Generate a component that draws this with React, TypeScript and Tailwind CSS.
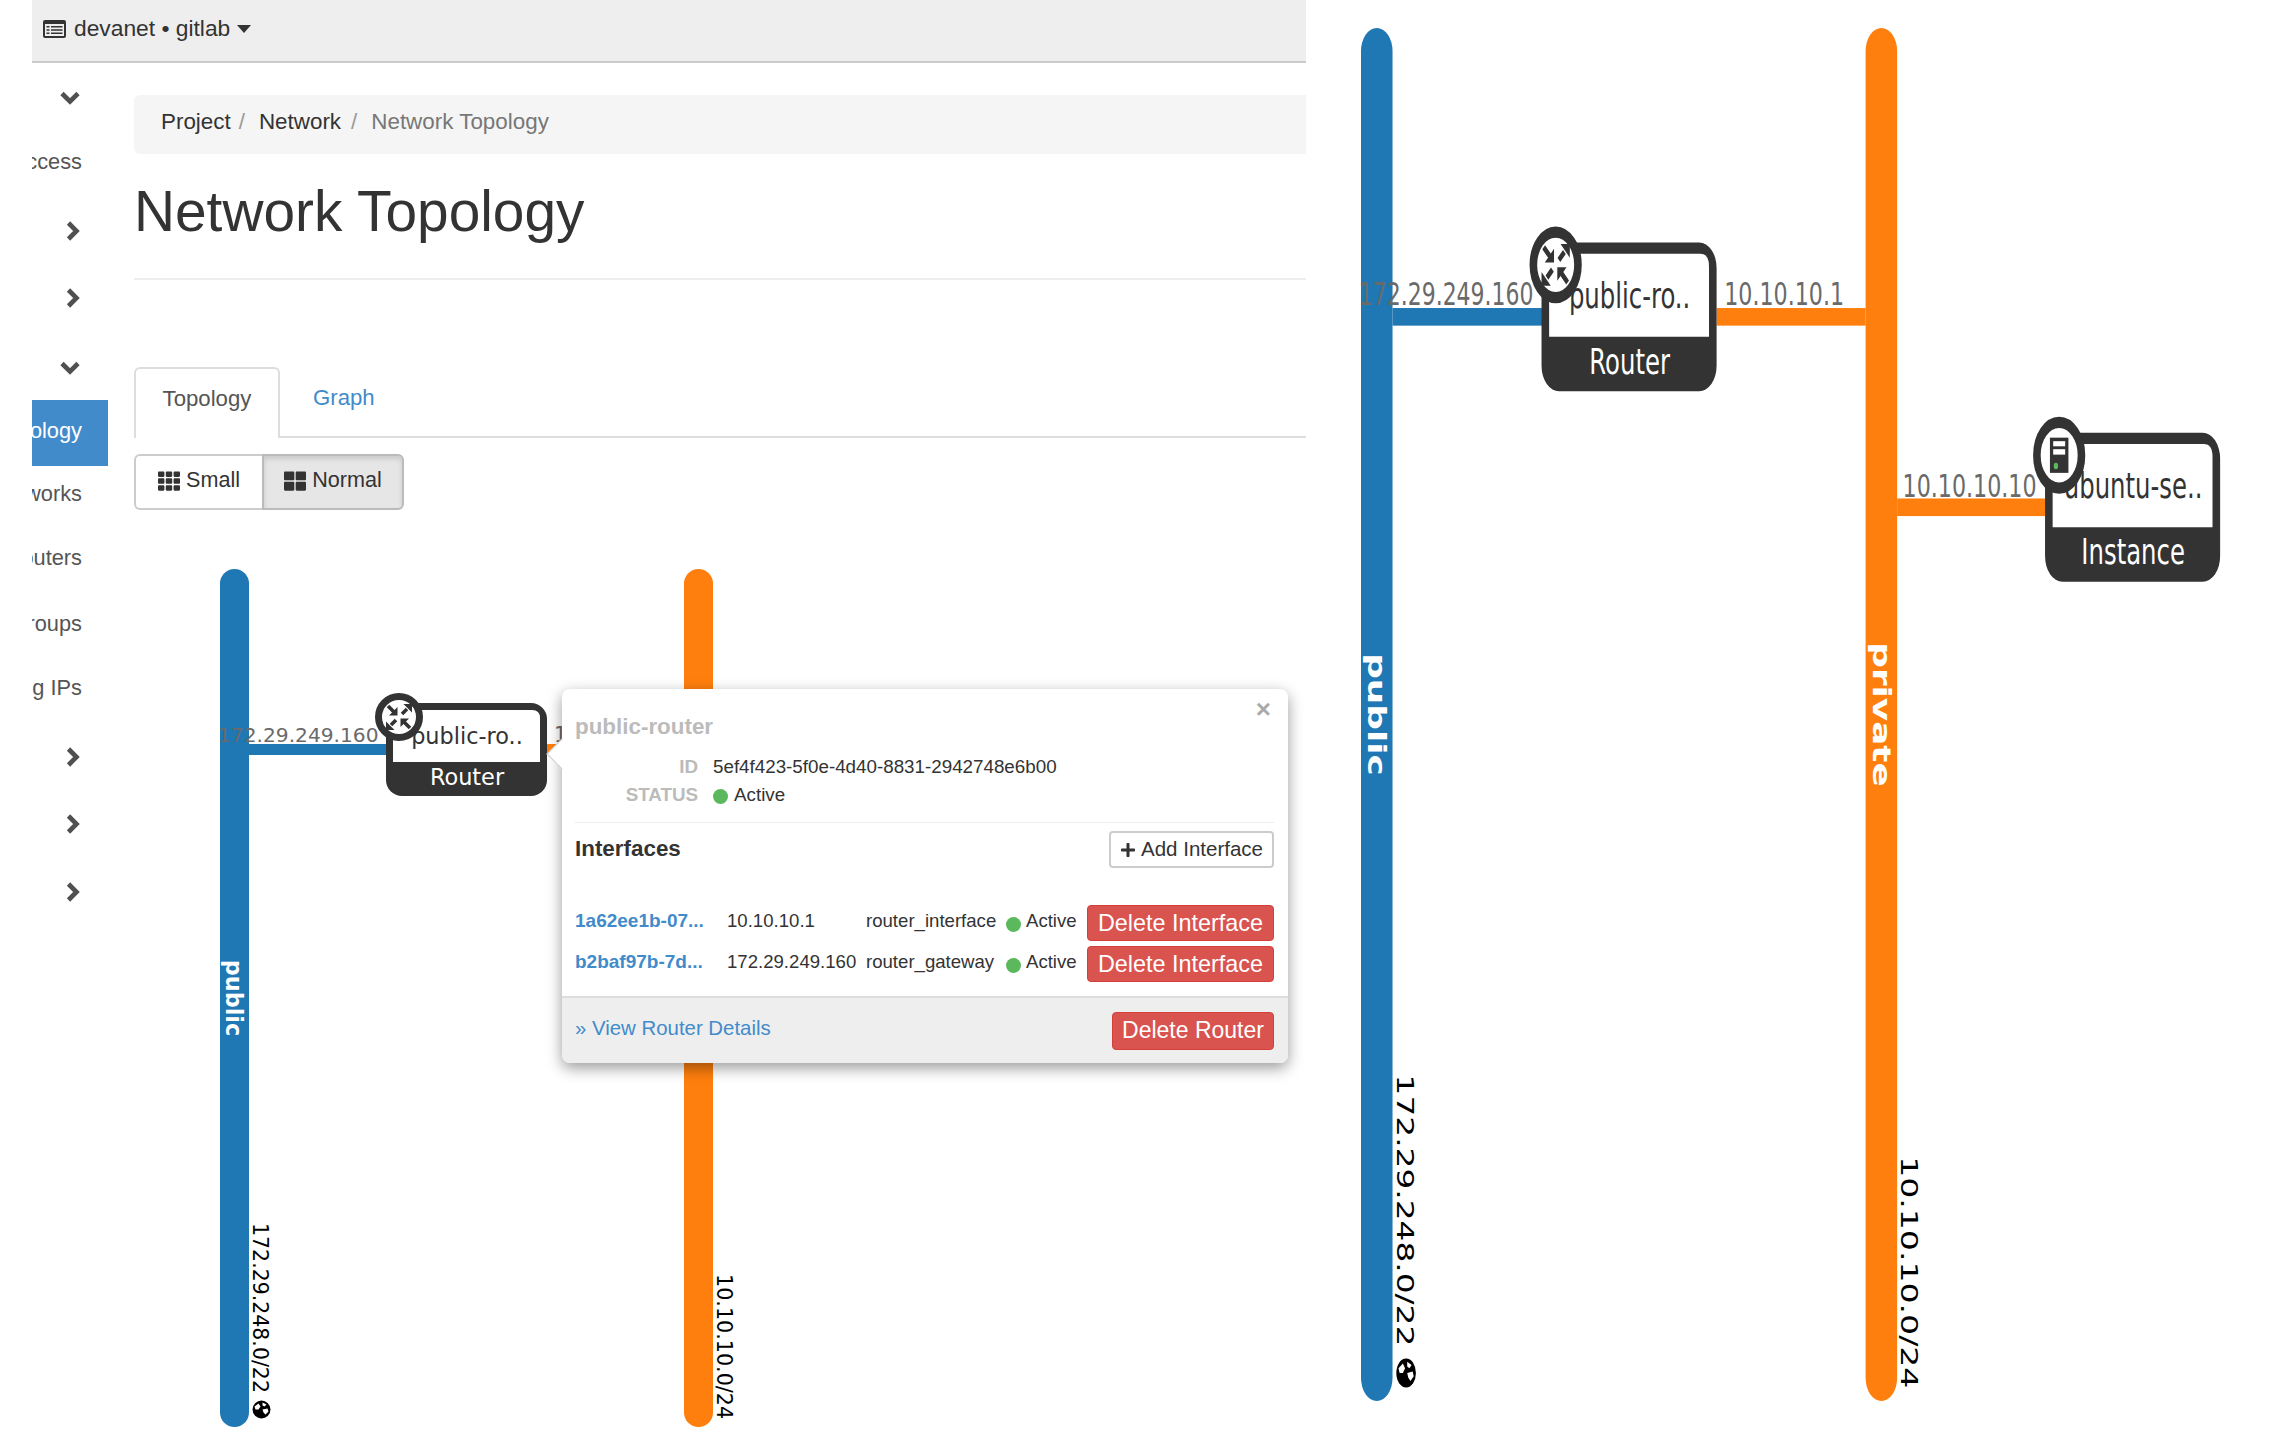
import { FaPlus, FaTh, FaThLarge } from "react-icons/fa";

const sideRows = [
  { h: "h-[48px]", icon: "down" },
  { h: "h-[80px]", label: "API Access" },
  { h: "h-[58px]", icon: "right" },
  { h: "h-[76px]", icon: "right" },
  { h: "h-[64px]", icon: "down" },
  { h: "h-[66px]", label: "Network Topology", active: true },
  { h: "h-[56px]", label: "Networks" },
  { h: "h-[72px]", label: "Routers" },
  { h: "h-[60px]", label: "Security Groups" },
  { h: "h-[68px]", label: "Floating IPs" },
  { h: "h-[70px]", icon: "right" },
  { h: "h-[64px]", icon: "right" },
  { h: "h-[72px]", icon: "right" },
];

const ChevronDown = () => (
  <svg width="20" height="14" viewBox="0 0 20 14">
    <path d="M2 2.5 L10 10.5 L18 2.5" fill="none" stroke="#505050" strokeWidth="4.6" />
  </svg>
);

const ChevronRight = () => (
  <svg width="14" height="20" viewBox="0 0 14 20">
    <path d="M2.5 2 L10.5 10 L2.5 18" fill="none" stroke="#505050" strokeWidth="4.6" />
  </svg>
);

const ListIcon = () => (
  <svg width="23" height="18" viewBox="0 0 23 18">
    <rect width="23" height="18" rx="2" fill="#333" />
    <rect x="2" y="4" width="19" height="12" fill="#eee" />
    <path d="M3.5 6h3v1.5h-3z M8 6h11.5v1.5H8z M3.5 9.2h3v1.5h-3z M8 9.2h11.5v1.5H8z M3.5 12.4h3v1.5h-3z M8 12.4h11.5v1.5H8z" fill="#333" />
  </svg>
);

const Sidebar = () => (
  <div className="w-[76px] pt-[11px] shrink-0 overflow-hidden">
    {sideRows.map((row, i) => {
      if (row.icon === "down") {
        return (
          <div key={i} className={`${row.h} flex items-center pl-[28px]`}>
            <ChevronDown />
          </div>
        );
      }
      if (row.icon === "right") {
        return (
          <div key={i} className={`${row.h} flex items-center pl-[34px]`}>
            <ChevronRight />
          </div>
        );
      }
      return (
        <div
          key={i}
          className={`${row.h} flex items-center justify-end pr-[26px] overflow-hidden whitespace-nowrap text-[21.8px] ${
            row.active ? "bg-[#428bca] text-white pb-[4px]" : "text-[#555]"
          }`}
        >
          <span className="shrink-0">{row.label}</span>
        </div>
      );
    })}
  </div>
);

const Node = ({ x, y, name, type, router }: { x: number; y: number; name: string; type: string; router?: boolean }) => (
  <g transform={`translate(${x} ${y})`}>
    <rect width="161" height="93" rx="16" fill="#333" />
    <path d="M7 59 V15 Q7 7 15 7 H146 Q154 7 154 15 V59 Z" fill="#fff" />
    <text x="81" y="41" textAnchor="middle" fontSize="22.4" fill="#333">
      {name}
    </text>
    <text x="81" y="82" textAnchor="middle" fontSize="22.4" fill="#fff">
      {type}
    </text>
    <circle cx="13" cy="14" r="20.5" fill="#fff" stroke="#333" strokeWidth="7" />
    {router ? (
      <g transform="translate(13 14)">
        <path d="M-11 -11 L-5 -5 M3 -3 L8 -8 M-3 3 L-8 8 M11 11 L5 5" stroke="#333" strokeWidth="3.6" fill="none" />
        <path d="M-1.5 -1.5 V-10 L-10 -1.5 Z M13 -13 H4.5 L13 -4.5 Z M-13 13 H-4.5 L-13 4.5 Z M1.5 1.5 V10 L10 1.5 Z" fill="#333" />
      </g>
    ) : (
      <g transform="translate(13 14)">
        <rect x="-8.5" y="-11" width="17" height="22" fill="#333" />
        <rect x="-5.5" y="-8.8" width="11" height="3.2" fill="#fff" />
        <rect x="-5.5" y="-3.8" width="11" height="3.4" fill="#fff" />
        <circle cx="-3" cy="6.7" r="2" fill="#5cb85c" />
      </g>
    )}
  </g>
);

// same drawing twice, the right copy is only stretched
const Topology = ({ className }: { className: string }) => (
  <svg viewBox="0 0 800 858" preserveAspectRatio="none" className={`${className} block overflow-visible font-['DejaVu_Sans']`}>
    <rect x="29" y="175" width="138" height="11" fill="#1f77b4" />
    <rect x="327" y="175" width="137" height="11" fill="#ff7f0e" />
    <rect x="493" y="294" width="136" height="11" fill="#ff7f0e" />
    <rect width="29" height="858" rx="14.5" fill="#1f77b4" />
    <rect x="464" width="29" height="858" rx="14.5" fill="#ff7f0e" />

    <text x="-2" y="173" fontSize="20.2" fill="#6a6a6a">
      172.29.249.160
    </text>
    <text x="334" y="173" fontSize="20.4" fill="#6a6a6a">
      10.10.10.1
    </text>
    <text x="498" y="293" fontSize="20.4" fill="#6a6a6a">
      10.10.10.10
    </text>

    <text transform="translate(6 429) rotate(90)" textAnchor="middle" fontSize="22.4" fontWeight="700" fill="#fff">
      public
    </text>
    <text transform="translate(470.5 429) rotate(90)" textAnchor="middle" fontSize="22.4" fontWeight="700" fill="#fff">
      private
    </text>

    <text transform="translate(33 654) rotate(90)" fontSize="20.5" fill="#000">
      172.29.248.0/22
    </text>
    <text transform="translate(497 705) rotate(90)" fontSize="20.7" fill="#000">
      10.10.10.0/24
    </text>
    <g transform="translate(41.5 840.5)">
      <circle r="9" fill="#000" />
      <path d="M-7 -3 L-3 -6 L-1 -3 L-3 0 L-6 0 Z M1 -7 L5 -5 L3 -3 L1 -4 Z M1 0 L6 -1 L7 2 L4 5 L2 3 Z" fill="#fff" />
    </g>

    <Node x={166} y={134} name="public-ro.." type="Router" router />
    <Node x={629} y={253} name="ubuntu-se.." type="Instance" />
  </svg>
);

const StatusDot = () => <span className="w-[15px] h-[15px] rounded-full bg-[#5cb85c] shrink-0 mt-[3px]" />;

const InterfaceRow = ({ id, ip, type }: { id: string; ip: string; type: string }) => (
  <div className="flex items-center h-[36px] text-[18.6px] text-[#333]">
    <a className="w-[152px] font-bold text-[19px] text-[#428bca] pb-[4px]">{id}</a>
    <span className="w-[139px] pb-[4px]">{ip}</span>
    <span className="w-[140px] pb-[4px]">{type}</span>
    <StatusDot />
    <span className="ml-[5px] pb-[4px]">Active</span>
    <button className="ml-auto w-[187px] h-full pb-[2px] rounded-[4px] bg-[#d9534f] border border-[#d43f3a] text-white text-[23.4px]">
      Delete Interface
    </button>
  </div>
);

const RouterPopover = () => (
  <div className="absolute left-[342px] top-[120px] w-[726px] h-[374px] flex flex-col bg-white rounded-[8px] shadow-[0_5px_15px_rgba(0,0,0,0.4)]">
    <div className="absolute -left-[11px] top-[54px] w-[22px] h-[22px] rotate-45 bg-white border-l border-b border-[#ccc]" />
    <span className="absolute right-[17px] top-[6px] text-[26px] font-bold leading-[28px] text-[#aaa]">×</span>
    <div className="relative flex-1 pl-[13px] pr-[14px] pt-[26px]">
      <h3 className="text-[22.4px] leading-[24px] font-bold text-[#bbb]">public-router</h3>
      <div className="mt-[14px] grid grid-cols-[123px_1fr] gap-x-[15px] text-[18.8px] leading-[28px] text-[#333]">
        <span className="text-right font-bold text-[#bbb]">ID</span>
        <span>5ef4f423-5f0e-4d40-8831-2942748e6b00</span>
        <span className="text-right font-bold text-[#bbb]">STATUS</span>
        <span className="flex items-center gap-[6px]">
          <StatusDot />
          Active
        </span>
      </div>
      <div className="mt-[13px] border-t border-[#eee]" />
      <div className="mt-[8px] flex items-center justify-between">
        <h4 className="pb-[2px] text-[22.4px] font-bold text-[#333]">Interfaces</h4>
        <button className="w-[165px] h-[37px] flex items-center justify-center gap-[5px] rounded-[4px] border-2 border-[#ccc] text-[20.5px] text-[#333]">
          <FaPlus size={16} />
          Add Interface
        </button>
      </div>
      <div className="mt-[37px] flex flex-col gap-[5px]">
        <InterfaceRow id="1a62ee1b-07..." ip="10.10.10.1" type="router_interface" />
        <InterfaceRow id="b2baf97b-7d..." ip="172.29.249.160" type="router_gateway" />
      </div>
    </div>
    <div className="h-[67px] flex items-center justify-between pl-[13px] pr-[14px] bg-[#eee] border-t-2 border-[#ddd] rounded-b-[8px]">
      <a className="text-[20.4px] text-[#428bca] pb-[4px]">» View Router Details</a>
      <button className="w-[162px] h-[38px] rounded-[4px] bg-[#d9534f] border border-[#d43f3a] text-white text-[23px]">
        Delete Router
      </button>
    </div>
  </div>
);

export default function App() {
  return (
    <div className="w-[2271px] h-[1439px] flex overflow-hidden bg-white font-['Liberation_Sans'] text-[#333]">
      <div className="w-[1306px] shrink-0 pl-[32px]">
        <div className="h-[63px] flex items-center pl-[11px] pb-[4px] bg-[#eee] border-b-2 border-[#ccc] text-[22.8px]">
          <ListIcon />
          <span className="ml-[8px]">devanet • gitlab</span>
          <span className="ml-[7px] w-0 h-0 border-x-[7px] border-x-transparent border-t-[8px] border-t-[#333]" />
        </div>
        <div className="flex">
          <Sidebar />
          <div className="flex-1 pl-[26px] pt-[32px]">
            <div className="h-[59px] flex items-center pl-[27px] pb-[6px] bg-[#f5f5f5] rounded-l-[6px] text-[22.4px] text-[#333]">
              <span>Project</span>
              <span className="ml-[8px] text-[#999]">/</span>
              <span className="ml-[14px]">Network</span>
              <span className="ml-[10px] text-[#999]">/</span>
              <span className="ml-[14px] text-[#777]">Network Topology</span>
            </div>
            <div className="h-[126px] flex items-center pb-[8px] border-b-2 border-[#eee]">
              <h1 className="text-[56.8px] font-normal text-[#333]">Network Topology</h1>
            </div>
            <div className="mt-[87px] h-[71px] flex border-b-2 border-[#ddd] text-[22.2px]">
              <div className="w-[146px] h-[71px] flex items-center justify-center pb-[10px] bg-white border-2 border-b-0 border-[#ddd] rounded-t-[6px] text-[#555]">
                Topology
              </div>
              <div className="ml-[33px] flex items-center pb-[7px] text-[#428bca]">Graph</div>
            </div>
            <div className="mt-[16px] w-[270px] h-[56px] flex text-[21.6px] text-[#333]">
              <button className="w-[128px] flex items-center justify-center gap-[6px] pb-[3px] border-2 border-r-0 border-[#ccc] rounded-l-[6px]">
                <FaTh size={22} />
                Small
              </button>
              <button className="flex-1 flex items-center justify-center gap-[6px] pb-[3px] bg-[#e6e6e6] border-2 border-[#bbb] rounded-r-[6px] shadow-[inset_0_3px_5px_rgba(0,0,0,0.125)]">
                <FaThLarge size={22} />
                Normal
              </button>
            </div>
            <div className="relative mt-[59px] ml-[86px] w-[800px] h-[858px]">
              <Topology className="w-[800px] h-[858px]" />
              <RouterPopover />
            </div>
          </div>
        </div>
      </div>
      <div className="flex-1 pl-[55px] pt-[28px]">
        <Topology className="w-[870px] h-[1373px]" />
      </div>
    </div>
  );
}
